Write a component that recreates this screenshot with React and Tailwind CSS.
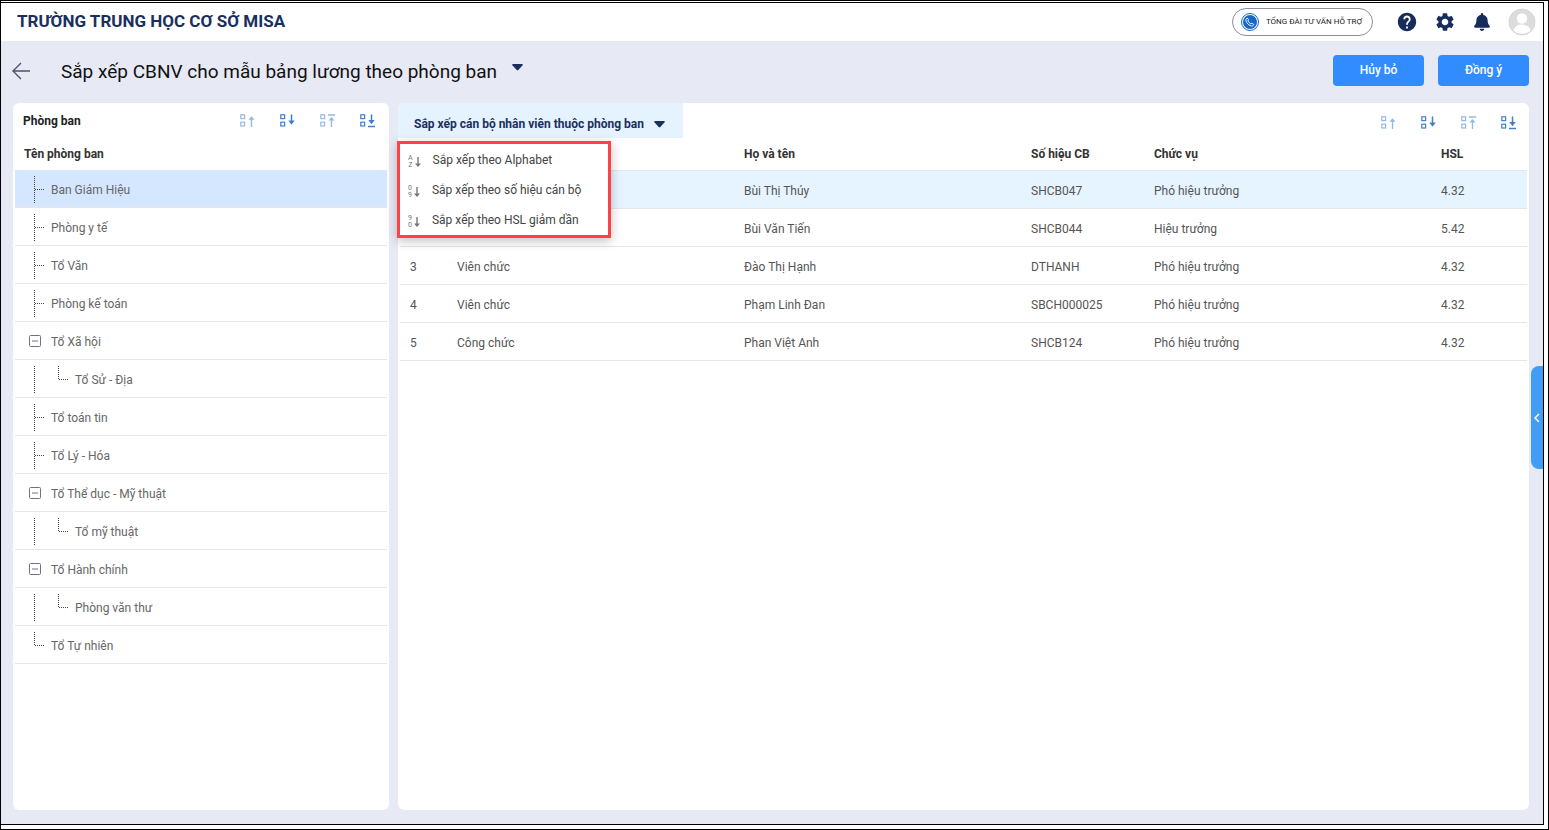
import { useState } from "react";
import { MdHelp, MdSettings } from "react-icons/md";
import { FaBell } from "react-icons/fa";

const DEPARTMENTS = [
  { name: "Ban Giám Hiệu", type: "leaf" },
  { name: "Phòng y tế", type: "leaf" },
  { name: "Tổ Văn", type: "leaf" },
  { name: "Phòng kế toán", type: "leaf" },
  { name: "Tổ Xã hội", type: "group" },
  { name: "Tổ Sử - Địa", type: "child" },
  { name: "Tổ toán tin", type: "leaf" },
  { name: "Tổ Lý - Hóa", type: "leaf" },
  { name: "Tổ Thể dục - Mỹ thuật", type: "group" },
  { name: "Tổ mỹ thuật", type: "child" },
  { name: "Tổ Hành chính", type: "group" },
  { name: "Phòng văn thư", type: "child" },
  { name: "Tổ Tự nhiên", type: "last" },
];

const EMPLOYEES = [
  { kind: "", name: "Bùi Thị Thúy", code: "SHCB047", position: "Phó hiệu trưởng", hsl: "4.32" },
  { kind: "", name: "Bùi Văn Tiến", code: "SHCB044", position: "Hiệu trưởng", hsl: "5.42" },
  { kind: "Viên chức", name: "Đào Thị Hạnh", code: "DTHANH", position: "Phó hiệu trưởng", hsl: "4.32" },
  { kind: "Viên chức", name: "Phạm Linh Đan", code: "SBCH000025", position: "Phó hiệu trưởng", hsl: "4.32" },
  { kind: "Công chức", name: "Phan Việt Anh", code: "SHCB124", position: "Phó hiệu trưởng", hsl: "4.32" },
];

const SORT_OPTIONS = [
  { top: "A", bottom: "Z", label: "Sắp xếp theo Alphabet" },
  { top: "0", bottom: "9", label: "Sắp xếp theo số hiệu cán bộ" },
  { top: "9", bottom: "0", label: "Sắp xếp theo HSL giảm dần" },
];

const MOVES = [
  { key: "up", label: "Lên", disabled: true },
  { key: "down", label: "Xuống", disabled: false },
  { key: "top", label: "Lên đầu", disabled: true },
  { key: "bottom", label: "Xuống cuối", disabled: false },
];

function MoveIcon({ kind }) {
  return (
    <svg width="16" height="14" viewBox="0 0 16 14" fill="none" stroke="currentColor">
      <rect x="0.8" y="0.8" width="3.8" height="3.8" strokeWidth="1.2" />
      <rect x="0.8" y="8.2" width="3.8" height="3.8" strokeWidth="1.2" />
      {kind === "up" && (
        <>
          <path d="M11.5 4v9" strokeWidth="1.4" />
          <path d="M8.5 5.8l3-3.6 3 3.6z" fill="currentColor" stroke="none" />
        </>
      )}
      {kind === "down" && (
        <>
          <path d="M11.5 0.5v8" strokeWidth="1.5" />
          <path d="M8.3 6.5l3.2 4.3 3.2-4.3z" fill="currentColor" stroke="none" />
        </>
      )}
      {kind === "top" && (
        <>
          <path d="M8 1h7M11.5 5v8" strokeWidth="1.3" />
          <path d="M8.5 6.5l3-3.5 3 3.5z" fill="currentColor" stroke="none" />
        </>
      )}
      {kind === "bottom" && (
        <>
          <path d="M8 12.5h7M11.5 0.5v7" strokeWidth="1.5" />
          <path d="M8.3 6l3.2 4.3L14.7 6z" fill="currentColor" stroke="none" />
        </>
      )}
    </svg>
  );
}

function MoveButtons() {
  return (
    <div className="flex gap-6">
      {MOVES.map((move) => (
        <button
          key={move.key}
          type="button"
          aria-label={move.label}
          disabled={move.disabled}
          className="text-[#3f7fcb] disabled:opacity-55"
        >
          <MoveIcon kind={move.key} />
        </button>
      ))}
    </div>
  );
}

function Caret() {
  return (
    <svg width="11" height="7" viewBox="0 0 11 7" fill="currentColor">
      <path d="M1 0h9c.8 0 1 .8.6 1.3L6.3 6.1c-.5.5-1.1.5-1.6 0L.4 1.3C0 .8.2 0 1 0z" />
    </svg>
  );
}

// dotted guide line of the tree, one cell per level
function Guide({ shape }) {
  return (
    <svg width="16" height="27" viewBox="0 0 16 27" fill="none" stroke="#444" strokeDasharray="1 1" shapeRendering="crispEdges">
      <path d={shape === "corner" ? "M5.5 0v14" : "M5.5 0v27"} />
      {shape !== "line" && <path d="M6 13.5h10" />}
    </svg>
  );
}

function TreeMark({ type }) {
  if (type === "group") {
    return (
      <button type="button" aria-label="Thu gọn" className="mr-1">
        <svg width="12" height="12" viewBox="0 0 12 12" fill="none" stroke="#70708c">
          <rect x="0.5" y="0.5" width="11" height="11" rx="1" />
          <path d="M3 6h6" />
        </svg>
      </button>
    );
  }
  if (type === "child") {
    return (
      <span className="flex gap-2">
        <Guide shape="line" />
        <Guide shape="corner" />
      </span>
    );
  }
  return <Guide shape={type === "last" ? "corner" : "tee"} />;
}

function TopBar() {
  return (
    <header className="flex h-[38px] items-center justify-between bg-white pr-[7px] pl-4">
      <div className="pb-px text-[17px] font-bold text-[#1b2f5e]">TRƯỜNG TRUNG HỌC CƠ SỞ MISA</div>
      <div className="flex items-center text-[#182c5b]">
        <button
          type="button"
          className="mr-[23px] flex h-7 items-center gap-1.5 rounded-full border border-[#8d8d9c] pr-[10px] pl-[7px] text-[8px] text-[#222]"
        >
          <svg width="20" height="20" viewBox="0 0 20 20" fill="none">
            <circle cx="10" cy="10" r="8.5" stroke="#1667c9" />
            <circle cx="10" cy="10" r="7" fill="#1667c9" />
            <path
              d="M7.2 6l1.5 1.9-.8 1c.6 1.3 1.7 2.4 3 3l1-.8 1.900 1.500c-.5 1.200-1.600 1.700-2.800 1.300-2.500-.8-4.300-2.600-5-5-.3-1.300.1-2.400 1.200-2.900z"
              stroke="#fff"
              strokeWidth="0.9"
            />
          </svg>
          TỔNG ĐÀI TƯ VẤN HỖ TRỢ
        </button>
        <div className="flex items-center gap-4">
          <button type="button" aria-label="Trợ giúp">
            <MdHelp size={22} />
          </button>
          <button type="button" aria-label="Cài đặt">
            <MdSettings size={22} />
          </button>
          <button type="button" aria-label="Thông báo" className="flex w-5 justify-center">
            <FaBell size={18} />
          </button>
          <button type="button" aria-label="Tài khoản">
            <svg width="28" height="28" viewBox="0 0 28 28">
              <circle cx="14" cy="14" r="13" fill="#dcdcdc" stroke="#d6d6d6" />
              <circle cx="14" cy="10.5" r="5.2" fill="#fff" />
              <path d="M5.5 22.5c1-4 4-6 8.500-6s7.500 2 8.500 6c-2.400 2.300-5.300 3.300-8.500 3.300s-6.100-1-8.500-3.300z" fill="#fff" />
            </svg>
          </button>
        </div>
      </div>
    </header>
  );
}

function TitleBar() {
  return (
    <div className="flex h-[62px] items-center justify-between pr-[14px] pb-px pl-[11px]">
      <div className="flex items-center">
        <button type="button" aria-label="Quay lại" className="mr-[31px]">
          <svg width="18" height="18" viewBox="0 0 18 18" fill="none" stroke="#51516b" strokeWidth="1.4">
            <path d="M9 1L1 9l8 8M1 9h17" />
          </svg>
        </button>
        <h1 className="text-[19px] text-[#111]">Sắp xếp CBNV cho mẫu bảng lương theo phòng ban</h1>
        <button type="button" aria-label="Chọn chế độ" className="ml-[15px] pb-2 text-[#1b2f5e]">
          <Caret />
        </button>
      </div>
      <div className="flex gap-[14px] pb-0.5">
        <button type="button" className="h-[31px] w-[91px] rounded bg-[#318cff] pb-px text-xs font-medium text-white">
          Hủy bỏ
        </button>
        <button type="button" className="h-[31px] w-[91px] rounded bg-[#318cff] pb-px text-xs font-medium text-white">
          Đồng ý
        </button>
      </div>
    </div>
  );
}

function DepartmentPanel({ selected, onSelect }) {
  return (
    <section className="w-[376px] shrink-0 rounded-md bg-white px-[2px]">
      <div className="flex h-9 items-center justify-between pr-[11px] pl-2">
        <h2 className="font-bold text-[#222]">Phòng ban</h2>
        <MoveButtons />
      </div>
      <table className="w-full">
        <thead>
          <tr>
            <th className="h-[31px] px-[9px] pb-0.5 text-left font-bold text-[#333]">Tên phòng ban</th>
          </tr>
        </thead>
        <tbody>
          {DEPARTMENTS.map((dept, index) => (
            <tr
              key={dept.name}
              onClick={() => onSelect(index)}
              className={index === selected ? "bg-[#d5e7ff]" : ""}
            >
              <td className="p-0">
                <div className="flex h-[38px] items-center gap-1.5 border-b border-[#e6e6e6] pt-px pl-[14px] text-[#666]">
                  <TreeMark type={dept.type} />
                  <span className="pt-0.5">{dept.name}</span>
                </div>
              </td>
            </tr>
          ))}
        </tbody>
      </table>
    </section>
  );
}

function SortMenu({ open, onToggle }) {
  return (
    <div className="relative">
      <button
        type="button"
        onClick={onToggle}
        aria-expanded={open}
        className="flex h-[35px] items-center gap-2.5 rounded-tl-md bg-[#e5f2ff] pt-2 pr-[18px] pb-px pl-4 font-bold text-[#1b2f5e]"
      >
        Sắp xếp cán bộ nhân viên thuộc phòng ban
        <Caret />
      </button>
      {open && (
        <ul className="absolute top-[38px] -left-px z-10 w-[214px] border-3 border-[#fb4346] bg-white pt-px shadow-[0_3px_10px_rgba(0,0,0,0.25)]">
          {SORT_OPTIONS.map((option) => (
            <li key={option.label}>
              <button type="button" className="flex h-[30px] w-full items-center gap-3 pl-2 text-[#444]">
                <span aria-hidden="true" className="flex items-center gap-0.5 pt-1 text-[#777]">
                  <span className="flex flex-col text-[7px] leading-[7px]">
                    <span>{option.top}</span>
                    <span>{option.bottom}</span>
                  </span>
                  <svg width="6" height="12" viewBox="0 0 6 12" fill="currentColor">
                    <path d="M2.3 1h1.4v6.5H6l-3 3.5-3-3.500h2.300z" />
                  </svg>
                </span>
                {option.label}
              </button>
            </li>
          ))}
        </ul>
      )}
    </div>
  );
}

function EmployeePanel() {
  const [menuOpen, setMenuOpen] = useState(true);

  return (
    <section className="min-w-0 flex-1 rounded-md bg-white">
      <div className="flex h-[35px] items-center justify-between pr-[12px]">
        <SortMenu open={menuOpen} onToggle={() => setMenuOpen(!menuOpen)} />
        <div className="pt-1">
          <MoveButtons />
        </div>
      </div>
      <div className="px-[2px]">
        <table className="w-full table-fixed text-left">
          <thead>
            <tr className="h-8 border-b border-[#e6e6e6] text-[#333]">
              <th className="w-[47px]" />
              <th />
              <th className="px-[10px] font-bold">Họ và tên</th>
              <th className="w-[123px] px-[10px] font-bold">Số hiệu CB</th>
              <th className="px-[10px] font-bold">Chức vụ</th>
              <th className="w-[96px] px-[10px] font-bold">HSL</th>
            </tr>
          </thead>
          <tbody>
            {EMPLOYEES.map((employee, index) => (
              <tr
                key={employee.code}
                className={`h-[38px] border-b border-[#e6e6e6] text-[#555] ${index === 0 ? "bg-[#e6f4ff]" : ""}`}
              >
                <td className="px-[10px] pt-[3px]">{index + 1}</td>
                <td className="px-[10px] pt-[3px]">{employee.kind}</td>
                <td className="px-[10px] pt-[3px]">{employee.name}</td>
                <td className="px-[10px] pt-[3px]">{employee.code}</td>
                <td className="px-[10px] pt-[3px]">{employee.position}</td>
                <td className="px-[10px] pt-[3px]">{employee.hsl}</td>
              </tr>
            ))}
          </tbody>
        </table>
      </div>
    </section>
  );
}

export default function App() {
  const [selected, setSelected] = useState(0);

  return (
    <div className="flex min-h-screen flex-col border border-black bg-white pt-px pr-1 pb-1 font-['Roboto','Noto_Sans',sans-serif] text-xs">
      <div className="relative flex flex-1 flex-col border-t border-r border-b border-black bg-[#e7e9f5]">
        <TopBar />
        <TitleBar />
        <main className="flex flex-1 gap-[9px] pr-[14px] pb-[14px] pl-3">
          <DepartmentPanel selected={selected} onSelect={setSelected} />
          <EmployeePanel />
        </main>
        <button
          type="button"
          aria-label="Mở rộng"
          className="absolute top-[363px] right-0 flex h-[103px] w-3 items-center justify-center rounded-l-lg bg-[#429df5] text-white"
        >
          <svg width="6" height="10" viewBox="0 0 6 10" fill="none" stroke="currentColor" strokeWidth="1.5">
            <path d="M5 1L1 5l4 4" />
          </svg>
        </button>
      </div>
    </div>
  );
}
